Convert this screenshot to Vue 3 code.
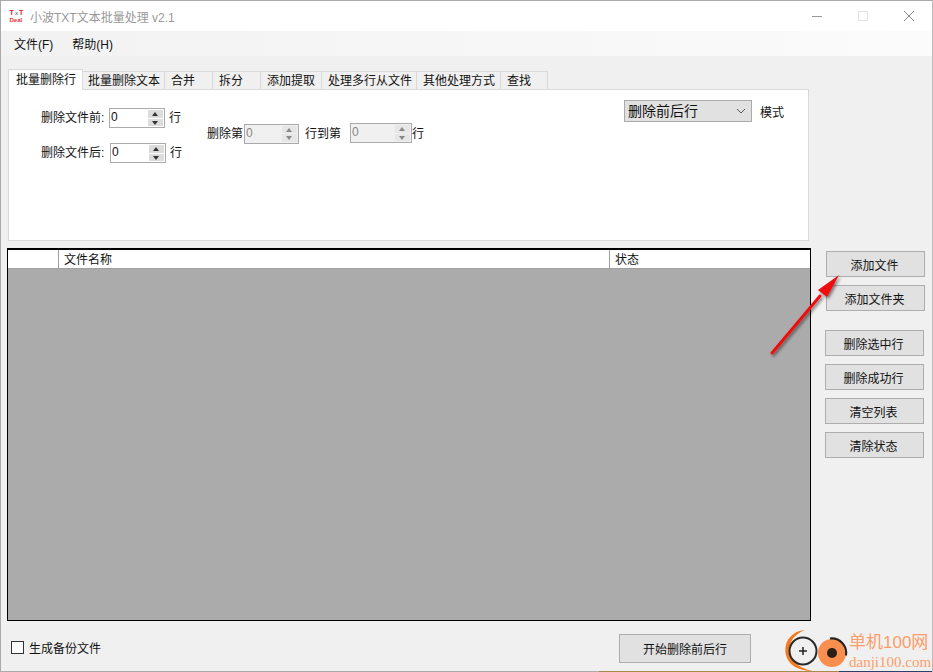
<template>
  <div class="window">
    <header class="titlebar">
      <svg class="app-icon" width="16" height="14" viewBox="0 0 16 14">
        <text x="0.5" y="6" class="icon-top">T</text>
        <text x="6" y="6" class="icon-mid">x</text>
        <text x="10" y="6" class="icon-top">T</text>
        <text x="0.5" y="13" class="icon-text">Deal</text>
      </svg>
      <span class="title">小波TXT文本批量处理 v2.1</span>
      <div class="controls">
        <svg width="12" height="12" viewBox="0 0 12 12"><path d="M1 6.500h10" stroke="#999" /></svg>
        <svg width="12" height="12" viewBox="0 0 12 12"><rect x="1.500" y="1.500" width="9" height="9" fill="none" stroke="#e3e3e3" /></svg>
        <svg width="12" height="12" viewBox="0 0 12 12"><path d="M1 1l10 10M11 1L1 11" stroke="#888" /></svg>
      </div>
    </header>

    <nav class="menubar">
      <span v-for="item in menus" :key="item">{{ item }}</span>
    </nav>

    <section class="tabs-area">
      <div class="tabs">
        <div
          v-for="(tab, i) in tabs"
          :key="tab.name"
          class="tab"
          :class="{ active: i === 0 }"
          :style="{ width: tab.width + 'px' }">
          {{ tab.name }}
        </div>
      </div>

      <div class="panel">
        <div class="col-left">
          <div class="field">
            <span class="label">删除文件前:</span>
            <div class="spin">
              <span class="spin-value">0</span>
              <div class="spin-btns"><i class="up"></i><i class="down"></i></div>
            </div>
            <span class="unit">行</span>
          </div>
          <div class="field second">
            <span class="label">删除文件后:</span>
            <div class="spin">
              <span class="spin-value">0</span>
              <div class="spin-btns"><i class="up"></i><i class="down"></i></div>
            </div>
            <span class="unit">行</span>
          </div>
        </div>

        <div class="col-mid">
          <span class="mid-text">删除第</span>
          <div class="spin off first">
            <span class="spin-value">0</span>
            <div class="spin-btns"><i class="up"></i><i class="down"></i></div>
          </div>
          <span class="mid-text to">行到第</span>
          <div class="spin off wide">
            <span class="spin-value">0</span>
            <div class="spin-btns"><i class="up"></i><i class="down"></i></div>
          </div>
          <span class="mid-text">行</span>
        </div>

        <div class="col-right">
          <div class="select">
            <span class="select-text">删除前后行</span>
            <svg width="10" height="6" viewBox="0 0 10 6"><path d="M1 1l4 4 4-4" fill="none" stroke="#555" /></svg>
          </div>
          <span class="mode">模式</span>
        </div>
      </div>
    </section>

    <section class="list-row">
      <div class="grid">
        <div class="grid-head">
          <div></div>
          <div>文件名称</div>
          <div>状态</div>
        </div>
      </div>
      <aside class="side">
        <button class="btn shifted">添加文件</button>
        <button class="btn shifted">添加文件夹</button>
        <button class="btn gap-top">删除选中行</button>
        <button class="btn">删除成功行</button>
        <button class="btn">清空列表</button>
        <button class="btn">清除状态</button>
      </aside>
    </section>

    <footer class="bottom">
      <label class="check"><i class="box"></i>生成备份文件</label>
      <button class="btn start">开始删除前后行</button>
      <div class="logo">
        <svg width="66" height="46" viewBox="0 0 66 46">
          <path d="M21 4C6 5-1 18 2 29c2 9 11 16 27 16C14 42 6 34 5.500 25 5 15 11 8 21 4Z" fill="#f47a20" />
          <circle cx="19" cy="25" r="13.500" fill="none" stroke="#2a2a2a" stroke-width="2" />
          <path d="M15 25h8M19 21v8" stroke="#222" stroke-width="1.500" />
          <circle cx="48" cy="27" r="14" fill="#f98f4e" />
          <path d="M46 12.500a14.500 14.500 0 0 1 16 17" fill="none" stroke="#222" stroke-width="2" />
          <circle cx="48" cy="27" r="5" fill="#2a2018" />
        </svg>
        <div class="logo-text">
          <div class="logo-cn">单机100网</div>
          <div class="logo-en">danji100.com</div>
        </div>
      </div>
    </footer>
    <div class="edge"></div>

    <!-- annotation arrow drawn over the screenshot -->
    <svg class="arrow" width="90" height="100" viewBox="0 0 90 100">
      <defs>
        <filter id="arrow-shadow" x="-30%" y="-30%" width="160%" height="160%">
          <feDropShadow dx="1.500" dy="2" stdDeviation="1.500" flood-color="#000" flood-opacity="0.5" />
        </filter>
      </defs>
      <g filter="url(#arrow-shadow)">
        <path d="M12 82L60 25" stroke="#ee1111" stroke-width="3" stroke-linecap="round" />
        <path d="M79 4L58 19L67 26Z" fill="#ee1111" />
      </g>
    </svg>
  </div>
</template>

<script setup>
const menus = ['文件(F)', '帮助(H)'];

const tabs = [
  { name: '批量删除行', width: 75 },
  { name: '批量删除文本', width: 82 },
  { name: '合并', width: 48 },
  { name: '拆分', width: 48 },
  { name: '添加提取', width: 61 },
  { name: '处理多行从文件', width: 95 },
  { name: '其他处理方式', width: 84 },
  { name: '查找', width: 47 },
];
</script>

<style>
html,
body {
  margin: 0;
  background: #f0f0f0;
}
</style>

<style scoped>
.window {
  position: relative;
  width: 933px;
  height: 672px;
  box-sizing: border-box;
  display: flex;
  flex-direction: column;
  background: #f0f0f0;
  border: 1px solid #aaa;
  border-right-color: #bbb;
  border-bottom: 0;
  overflow: hidden;
  font-family: "Liberation Sans", "Noto Sans CJK SC", sans-serif;
  font-size: 12px;
  color: #111;
}

.titlebar {
  height: 30px;
  flex: none;
  display: flex;
  align-items: center;
  background: #fff;
  padding-left: 8px;
}

.app-icon {
  flex: none;
}

.icon-top {
  font-size: 7px;
  font-weight: 700;
  fill: #e02020;
}

.icon-mid {
  font-size: 6px;
  fill: #444;
}

.icon-text {
  font-size: 6px;
  font-weight: 700;
  fill: #e83030;
}

.title {
  margin-left: 5px;
  color: #999;
}

.controls {
  margin-left: auto;
  display: flex;
  gap: 34px;
  padding-right: 17px;
}

.menubar {
  height: 25px;
  flex: none;
  display: flex;
  align-items: center;
  gap: 19px;
  padding-left: 13px;
  background: linear-gradient(90deg, #f2f2f2, #fbfbfb);
}

.tabs-area {
  flex: none;
  padding: 13px 0 0 7px;
}

.tabs {
  display: flex;
  align-items: flex-end;
  height: 20px;
}

.tab {
  height: 18px;
  box-sizing: border-box;
  padding-left: 6px;
  border: 1px solid #d9d9d9;
  border-left: 0;
  border-bottom: 0;
  line-height: 19px;
  white-space: nowrap;
}

.tab:nth-child(2) {
  padding-left: 5px;
}

.tab.active {
  height: 21px;
  margin-bottom: -1px;
  padding-left: 7px;
  position: relative;
  z-index: 1;
  border-left: 1px solid #d9d9d9;
  background: #fff;
  line-height: 20px;
}

.panel {
  width: 801px;
  height: 152px;
  box-sizing: border-box;
  display: flex;
  background: #fff;
  border: 1px solid #d9d9d9;
  position: relative;
}

.col-left {
  width: 198px;
  flex: none;
  padding: 18px 0 0 32px;
  box-sizing: border-box;
}

.field {
  display: flex;
  align-items: center;
  height: 20px;
}

.field.second {
  margin-top: 15px;
}

.field.second .spin {
  margin-left: 1px;
}

.label {
  width: 68px;
  flex: none;
  margin-bottom: 4px;
}

.unit {
  margin: 0 0 4px 4px;
}

.col-mid {
  width: 417px;
  flex: none;
  height: 20px;
  margin-top: 33px;
  display: flex;
  align-items: center;
}

.mid-text {
  margin-bottom: 2px;
}

.to {
  margin: 0 9px 2px 6px;
}

.spin {
  width: 56px;
  height: 20px;
  box-sizing: border-box;
  flex: none;
  display: flex;
  justify-content: space-between;
  border: 1px solid #aaa;
  background: #fff;
}

.spin.off {
  background: #f0f0f0;
  color: #888;
}

.spin.first {
  width: 55px;
  margin: 1px 0 0 1px;
}

.spin.wide {
  width: 62px;
}

.spin-value {
  padding-left: 1px;
  line-height: 16px;
}

.spin-btns {
  width: 15px;
  flex: none;
  display: flex;
  flex-direction: column;
  gap: 1px;
  padding: 1px 1px 1px 0;
}

.spin-btns i {
  flex: 1;
  position: relative;
  background: #dcdcdc;
}

.spin.off .spin-btns i {
  background: #e6e6e6;
}

.spin-btns i::after {
  content: "";
  position: absolute;
  left: 4px;
  top: 2px;
  border-left: 3.500px solid transparent;
  border-right: 3.500px solid transparent;
}

.spin-btns .up::after {
  border-bottom: 4px solid #333;
}

.spin-btns .down::after {
  border-top: 4px solid #333;
}

.spin.off .spin-btns .up::after {
  border-bottom-color: #888;
}

.spin.off .spin-btns .down::after {
  border-top-color: #888;
}

.col-right {
  display: flex;
  align-items: center;
  height: 22px;
  margin-top: 10px;
}

.select {
  width: 128px;
  height: 22px;
  box-sizing: border-box;
  display: flex;
  align-items: center;
  justify-content: space-between;
  padding: 0 5px 0 3px;
  background: #e1e1e1;
  border: 1px solid #aaa;
  font-size: 14px;
}

.select-text {
  margin-bottom: 2px;
}

.mode {
  margin-left: 8px;
}

.list-row {
  flex: none;
  display: flex;
  padding: 7px 0 0 6px;
}

.grid {
  width: 804px;
  height: 373px;
  box-sizing: border-box;
  background: #ababab;
  border: 1px solid #000;
  border-top-width: 2px;
}

.grid-head {
  height: 18px;
  display: grid;
  grid-template-columns: 51px 551px 1fr;
  background: #fff;
  border-bottom: 1px solid #a0a0a0;
  line-height: 20px;
}

.grid-head > div {
  padding-left: 5px;
  border-right: 1px solid #a0a0a0;
}

.grid-head > div:last-child {
  border-right: 0;
}

.side {
  flex: none;
  width: 100px;
  margin-left: 14px;
  padding-top: 3px;
  display: flex;
  flex-direction: column;
  gap: 8px;
}

.btn {
  width: 99px;
  height: 26px;
  box-sizing: border-box;
  padding: 0 2px 0 0;
  background: #e1e1e1;
  border: 1px solid #adadad;
  font: inherit;
  color: #111;
}

.btn.shifted {
  margin-left: 1px;
}

.btn.gap-top {
  margin-top: 11px;
}

.bottom {
  flex: 1;
  min-height: 0;
  display: flex;
  align-items: flex-start;
  padding-left: 10px;
}

.check {
  display: flex;
  align-items: center;
  gap: 5px;
  margin-top: 18px;
  width: 608px;
}

.box {
  width: 13px;
  height: 13px;
  box-sizing: border-box;
  border: 1px solid #333;
  background: #fff;
}

.btn.start {
  width: 132px;
  height: 29px;
  margin-top: 13px;
  padding: 0;
}

.logo {
  display: flex;
  margin: 5px 0 0 33px;
}

.logo-text {
  margin-left: -1px;
  padding-top: 6px;
  color: #fb9e6a;
}

.logo-cn {
  font-size: 17px;
  line-height: 22px;
}

.logo-en {
  font-family: "Liberation Serif", serif;
  font-size: 15px;
  line-height: 16px;
}

.edge {
  flex: none;
  height: 1px;
  background: linear-gradient(90deg, #aaa 598px, #a58a4a 598px, #a58a4a 838px, #2a3f6a 838px);
}

.arrow {
  position: absolute;
  left: 759px;
  top: 270px;
}
</style>
